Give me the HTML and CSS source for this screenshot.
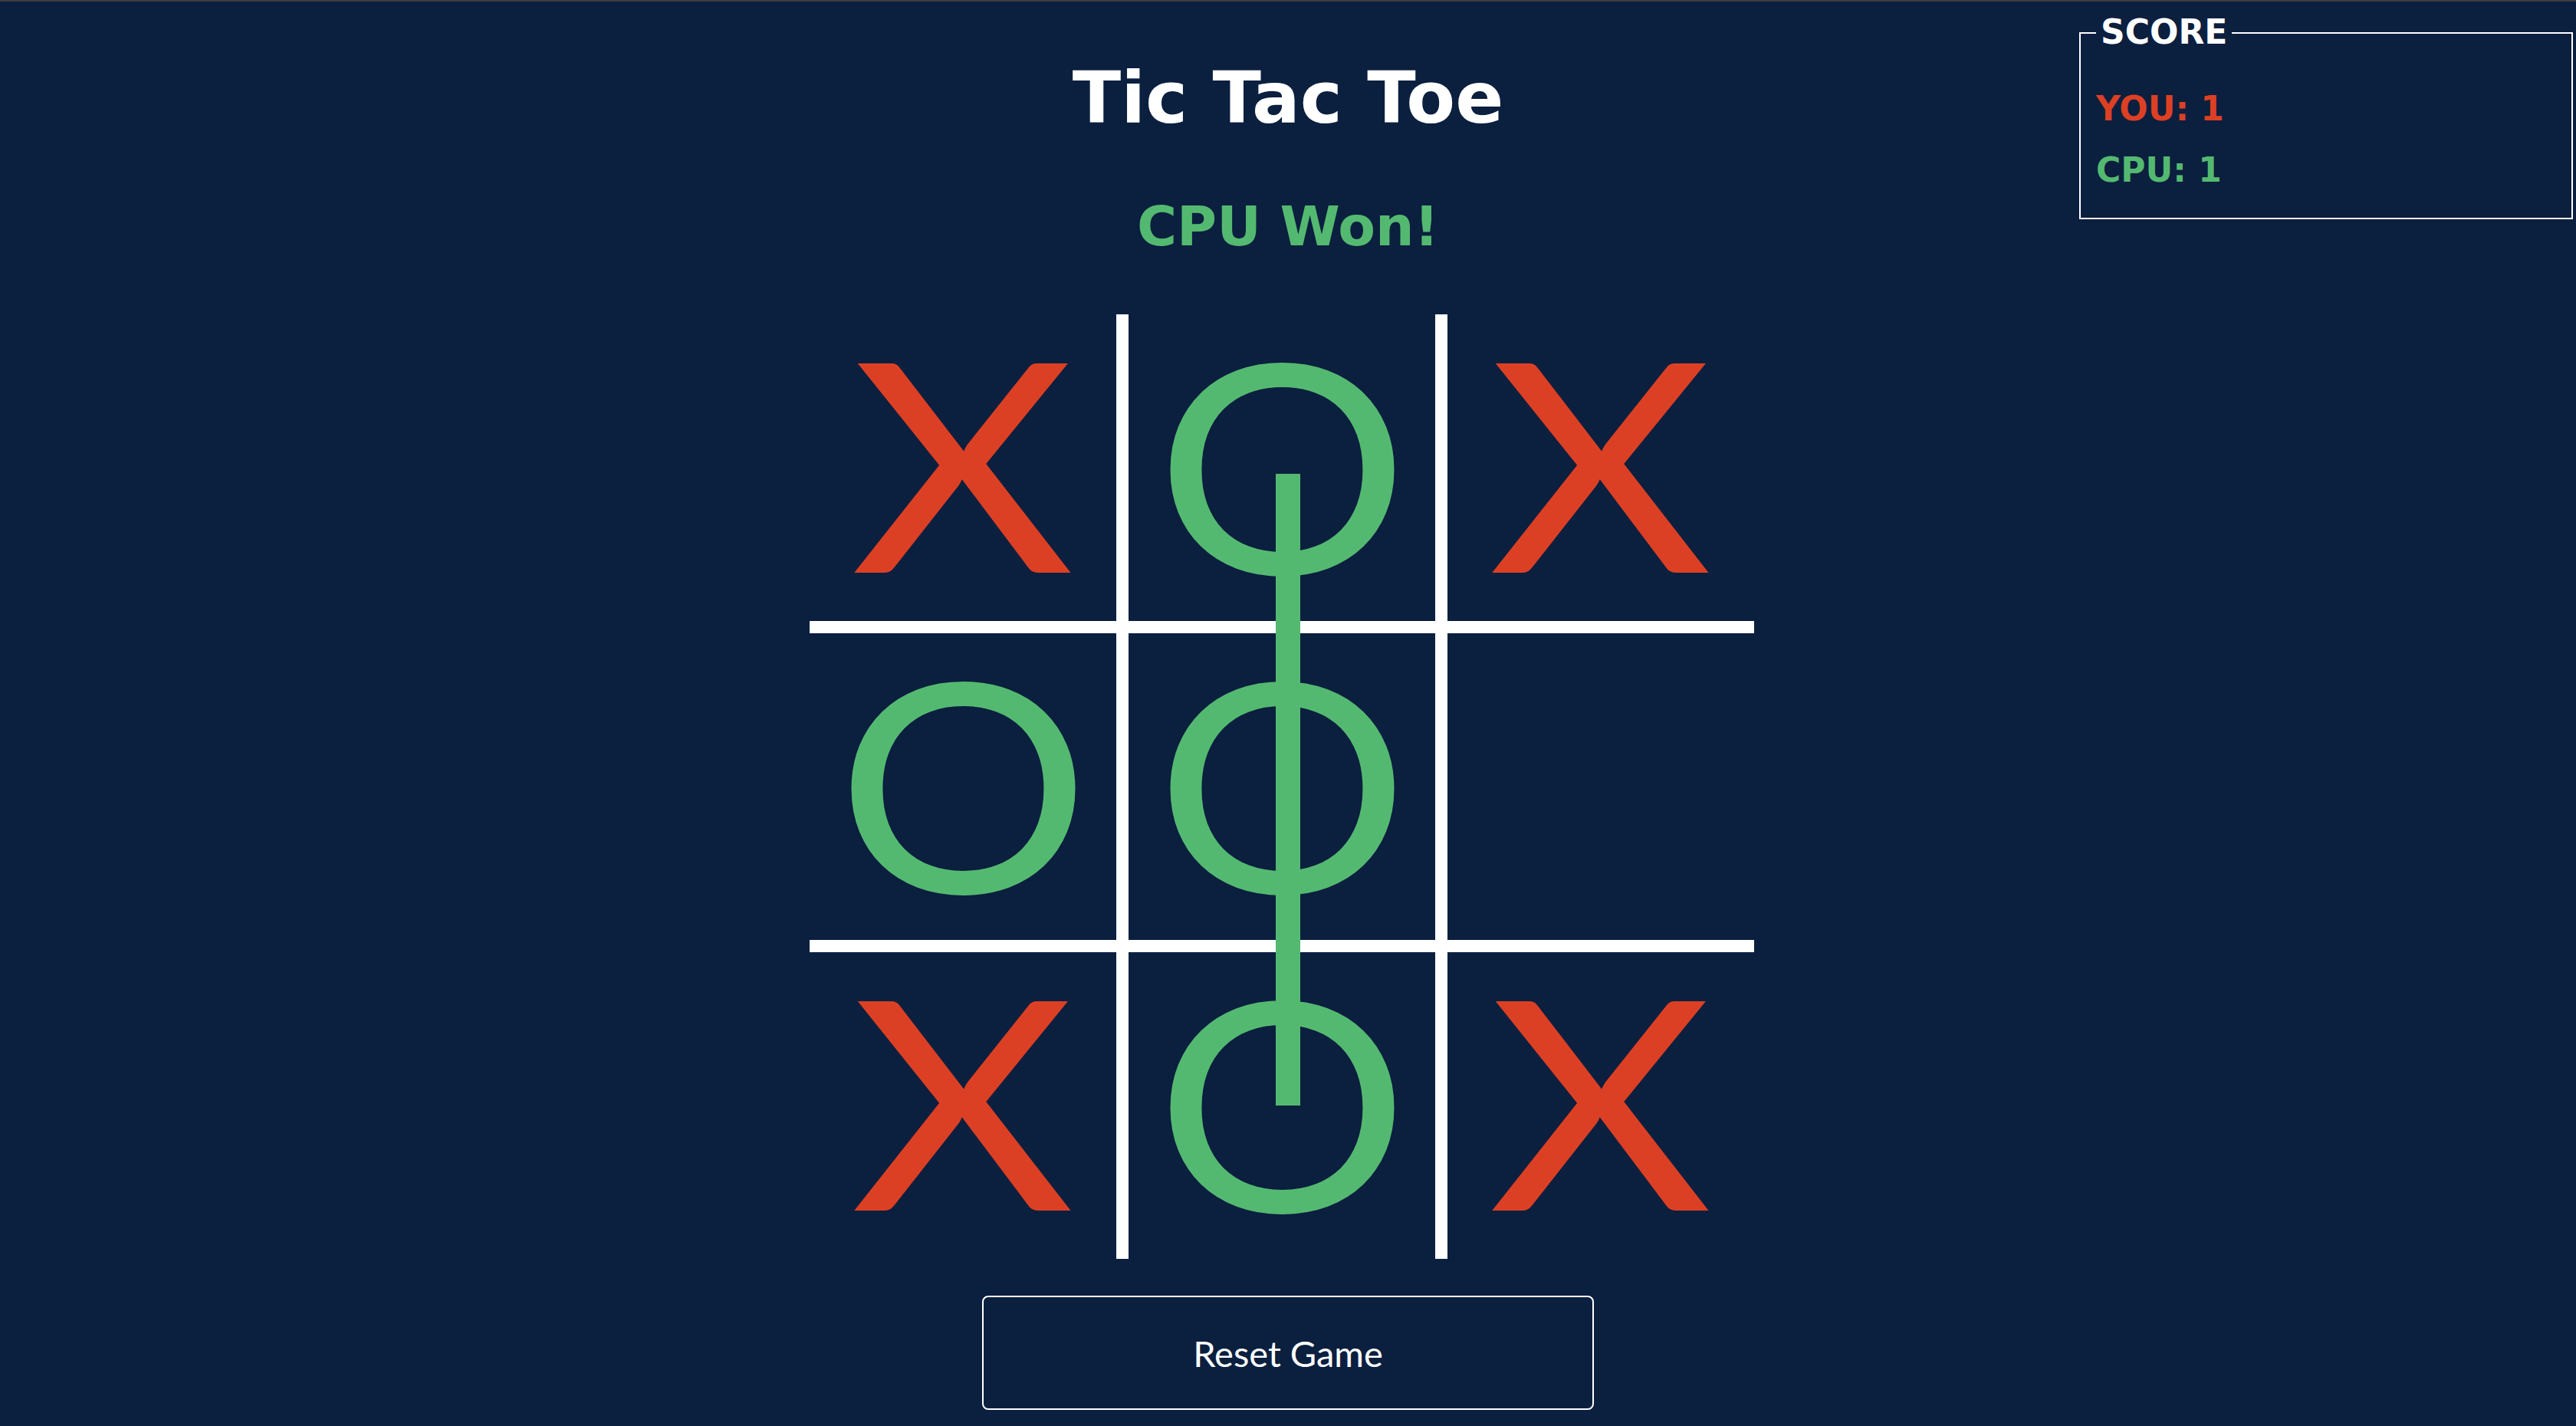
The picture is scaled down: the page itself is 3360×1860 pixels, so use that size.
FILE: index.html
```html
<!DOCTYPE html>
<html lang="en">
<head>
<meta charset="utf-8">
<title>Tic Tac Toe</title>
<link rel="stylesheet" href="styles.css">
</head>
<body>
<div class="page">
  <div class="side"></div>
  <main class="game">
    <h1 class="title">Tic Tac Toe</h1>
    <p class="status">CPU Won!</p>
    <div class="board">
      <div class="cell"><span class="mark x">X</span></div>
      <div class="cell"><span class="mark o">O</span></div>
      <div class="cell"><span class="mark x">X</span></div>
      <div class="cell"><span class="mark o">O</span></div>
      <div class="cell"><span class="mark o">O</span></div>
      <div class="cell"></div>
      <div class="cell"><span class="mark x">X</span></div>
      <div class="cell"><span class="mark o">O</span></div>
      <div class="cell"><span class="mark x">X</span></div>
      <div class="strike"></div>
    </div>
    <button class="reset" type="button">Reset Game</button>
  </main>
  <aside class="side side-right">
    <fieldset class="score">
      <legend class="score-title">SCORE</legend>
      <p class="score-line you">YOU: 1</p>
      <p class="score-line cpu">CPU: 1</p>
    </fieldset>
  </aside>
</div>
</body>
</html>
```
FILE: styles.css
```css
html, body {
  margin: 0;
  padding: 0;
}

body {
  background: #0b1f3f;
  border-top: 2px solid #3d3d3d;
  font-family: "Gill Sans", "Gill Sans MT", Lato, "Open Sans", sans-serif;
  color: #ffffff;
  min-height: 1858px;
  box-sizing: border-box;
}

.page {
  display: grid;
  grid-template-columns: 1fr auto 1fr;
}

.game {
  display: flex;
  flex-direction: column;
  align-items: center;
}

.title {
  margin: 80px 0 0;
  font-family: "DejaVu Sans", Verdana, sans-serif;
  font-size: 93px;
  line-height: 1;
  font-weight: 700;
  color: #ffffff;
  white-space: nowrap;
}

.status {
  margin: 85px 0 0;
  font-family: "DejaVu Sans", Verdana, sans-serif;
  font-size: 71px;
  line-height: 1;
  font-weight: 700;
  color: #54b970;
  white-space: nowrap;
}

.board {
  position: relative;
  margin: 79px 16px 0 0;
  display: grid;
  grid-template-columns: repeat(3, 400px);
  grid-template-rows: repeat(3, 400px);
  gap: 16px;
  background: #ffffff;
}

.cell {
  background: #0b1f3f;
  display: flex;
  align-items: center;
  justify-content: center;
  padding-bottom: 22px;
  box-sizing: border-box;
}

.mark {
  font-size: 381px;
  line-height: 1;
  font-weight: 400;
}

.mark.x {
  color: #dc4024;
  transform: scaleX(1.18);
}

.mark.o {
  color: #54b970;
  transform: translateY(2px) scaleX(1.085);
}

.strike {
  position: absolute;
  left: 608px;
  top: 208px;
  width: 32px;
  height: 824px;
  background: #54b970;
}

.reset {
  margin: 48px 0 0;
  width: 798px;
  height: 149px;
  background: #0b1f3f;
  border: 2px solid #ffffff;
  border-radius: 8px;
  color: #ffffff;
  font-family: "Gill Sans", "Gill Sans MT", Lato, "Open Sans", sans-serif;
  font-size: 47px;
  font-weight: 400;
  padding: 0;
}

.side-right {
  display: flex;
  justify-content: flex-end;
  align-items: flex-start;
}

.score {
  width: 644px;
  box-sizing: border-box;
  margin: 18px 4px 0 0;
  border: 2px solid #ffffff;
  padding: 0 20px 40px;
}

.score-title {
  padding: 0 6px 2px;
  font-family: "DejaVu Sans", Verdana, sans-serif;
  font-size: 44px;
  line-height: 44px;
  font-weight: 700;
  color: #ffffff;
}

.score-line {
  margin: 54px 0 0;
  font-family: "DejaVu Sans", Verdana, sans-serif;
  font-size: 44px;
  line-height: 1;
  font-weight: 700;
}

.score-line.cpu {
  margin-top: 36px;
}

.you {
  color: #dc4024;
}

.cpu {
  color: #54b970;
}
```
